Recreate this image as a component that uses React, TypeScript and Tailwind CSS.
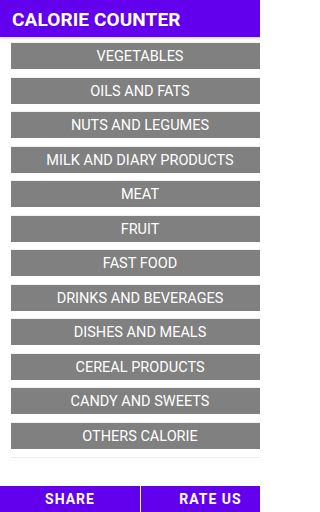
import React from 'react';

const categories = [
  'VEGETABLES',
  'OILS AND FATS',
  'NUTS AND LEGUMES',
  'MILK AND DIARY PRODUCTS',
  'MEAT',
  'FRUIT',
  'FAST FOOD',
  'DRINKS AND BEVERAGES',
  'DISHES AND MEALS',
  'CEREAL PRODUCTS',
  'CANDY AND SWEETS',
  'OTHERS CALORIE',
];

const App: React.FC = () => {
  return (
    <div
      className="w-[260px] h-[512px] overflow-hidden bg-white flex flex-col"
      style={{ fontFamily: 'Roboto, "Liberation Sans", sans-serif' }}
    >
      {/* Toolbar */}
      <div className="h-[37px] shrink-0 bg-[#6200ee] flex items-center pl-[12px] pt-[4px] shadow-[0_1px_2px_rgba(98,0,238,0.25)]">
        <span className="text-white text-[19px] font-bold tracking-[0.1px]">CALORIE COUNTER</span>
      </div>

      {/* Category list */}
      <div className="w-[280px] shrink-0 pt-[6px] pl-[11px] flex flex-col gap-[8.5px]">
        {categories.map((name) => (
          <button
            key={name}
            className="h-[26px] w-[258px] bg-[#808080] text-white text-[14.5px] pt-[2px] flex items-center justify-center shadow-[0_-1.5px_1px_#e2e2e2]"
          >
            {name}
          </button>
        ))}
      </div>
      <div className="ml-[11px] mt-[8px] h-px w-[270px] shrink-0 bg-[#ececec]" />

      <div className="flex-1" />

      {/* Bottom actions */}
      <div className="w-[280px] h-[26px] shrink-0 flex gap-px">
        <button className="w-[140px] h-full bg-[#6200ee] text-white text-[14px] font-bold tracking-[1px] flex items-center justify-center">
          SHARE
        </button>
        <button className="w-[139px] h-full bg-[#6200ee] text-white text-[14px] font-bold tracking-[1px] flex items-center justify-center">
          RATE US
        </button>
      </div>
    </div>
  );
};

export default App;
